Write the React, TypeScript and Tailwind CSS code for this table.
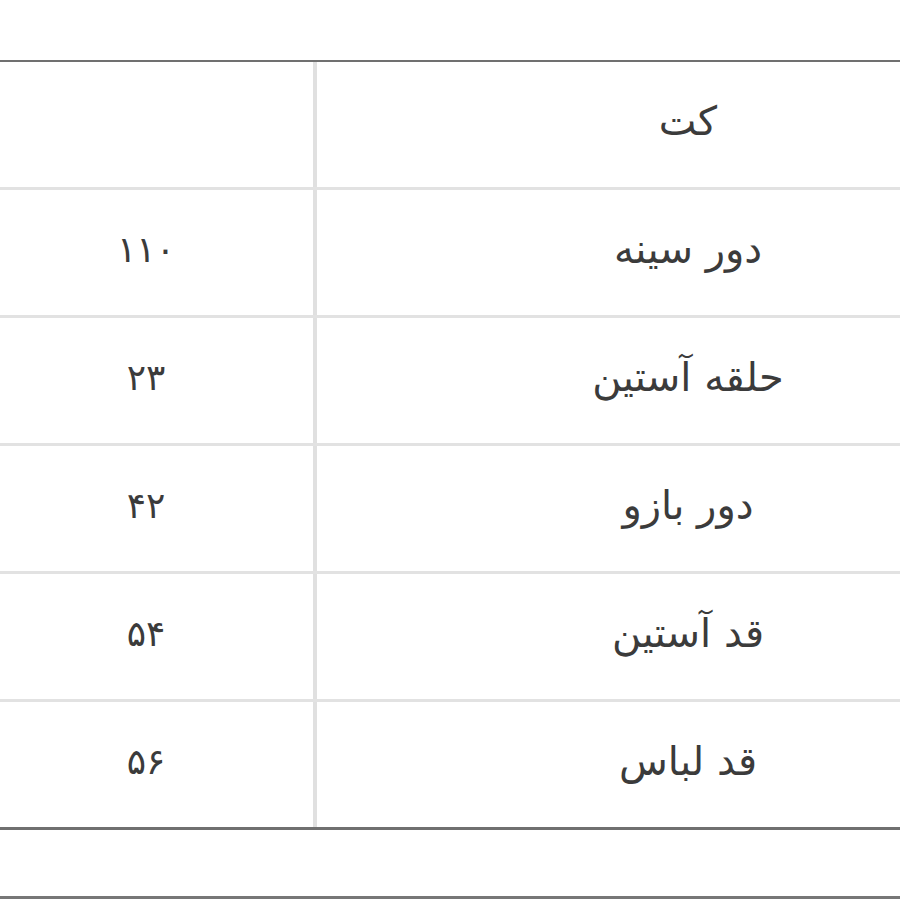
const rows = [
  { label: 'کت', value: '' },
  { label: 'دور سینه', value: '۱۱۰' },
  { label: 'حلقه آستین', value: '۲۳' },
  { label: 'دور بازو', value: '۴۲' },
  { label: 'قد آستین', value: '۵۴' },
  { label: 'قد لباس', value: '۵۶' },
]

export default function App() {
  return (
    <div
      className="w-[900px] h-[900px] bg-white overflow-hidden pt-[60px] text-[#3b3b3b]"
      style={{ fontFamily: '"DejaVu Sans", sans-serif' }}
    >
      {/* size table, wider than the viewport so it is cropped on both sides */}
      <div className="border-t-2 border-b-[3px] border-[#707070]">
        {rows.map((r, i) => (
          <div key={r.label}>
            {i > 0 && <div className="h-[3px] bg-[#e2e2e2]" />}
            <div className="flex w-[1080px] -ml-[21px] h-[125px]">
              <div dir="rtl" className="w-[334px] flex items-center justify-center pb-[6px] text-[36px]">
                {r.value}
              </div>
              <div className="w-[4px] bg-[#e0e0e0]" />
              <div dir="rtl" className="w-[742px] flex items-center justify-center pb-[8px] text-[40px]">
                {r.label}
              </div>
            </div>
          </div>
        ))}
      </div>
      <div className="h-[66px]" />
      <div className="h-[3px] bg-[#777777]" />
    </div>
  )
}
